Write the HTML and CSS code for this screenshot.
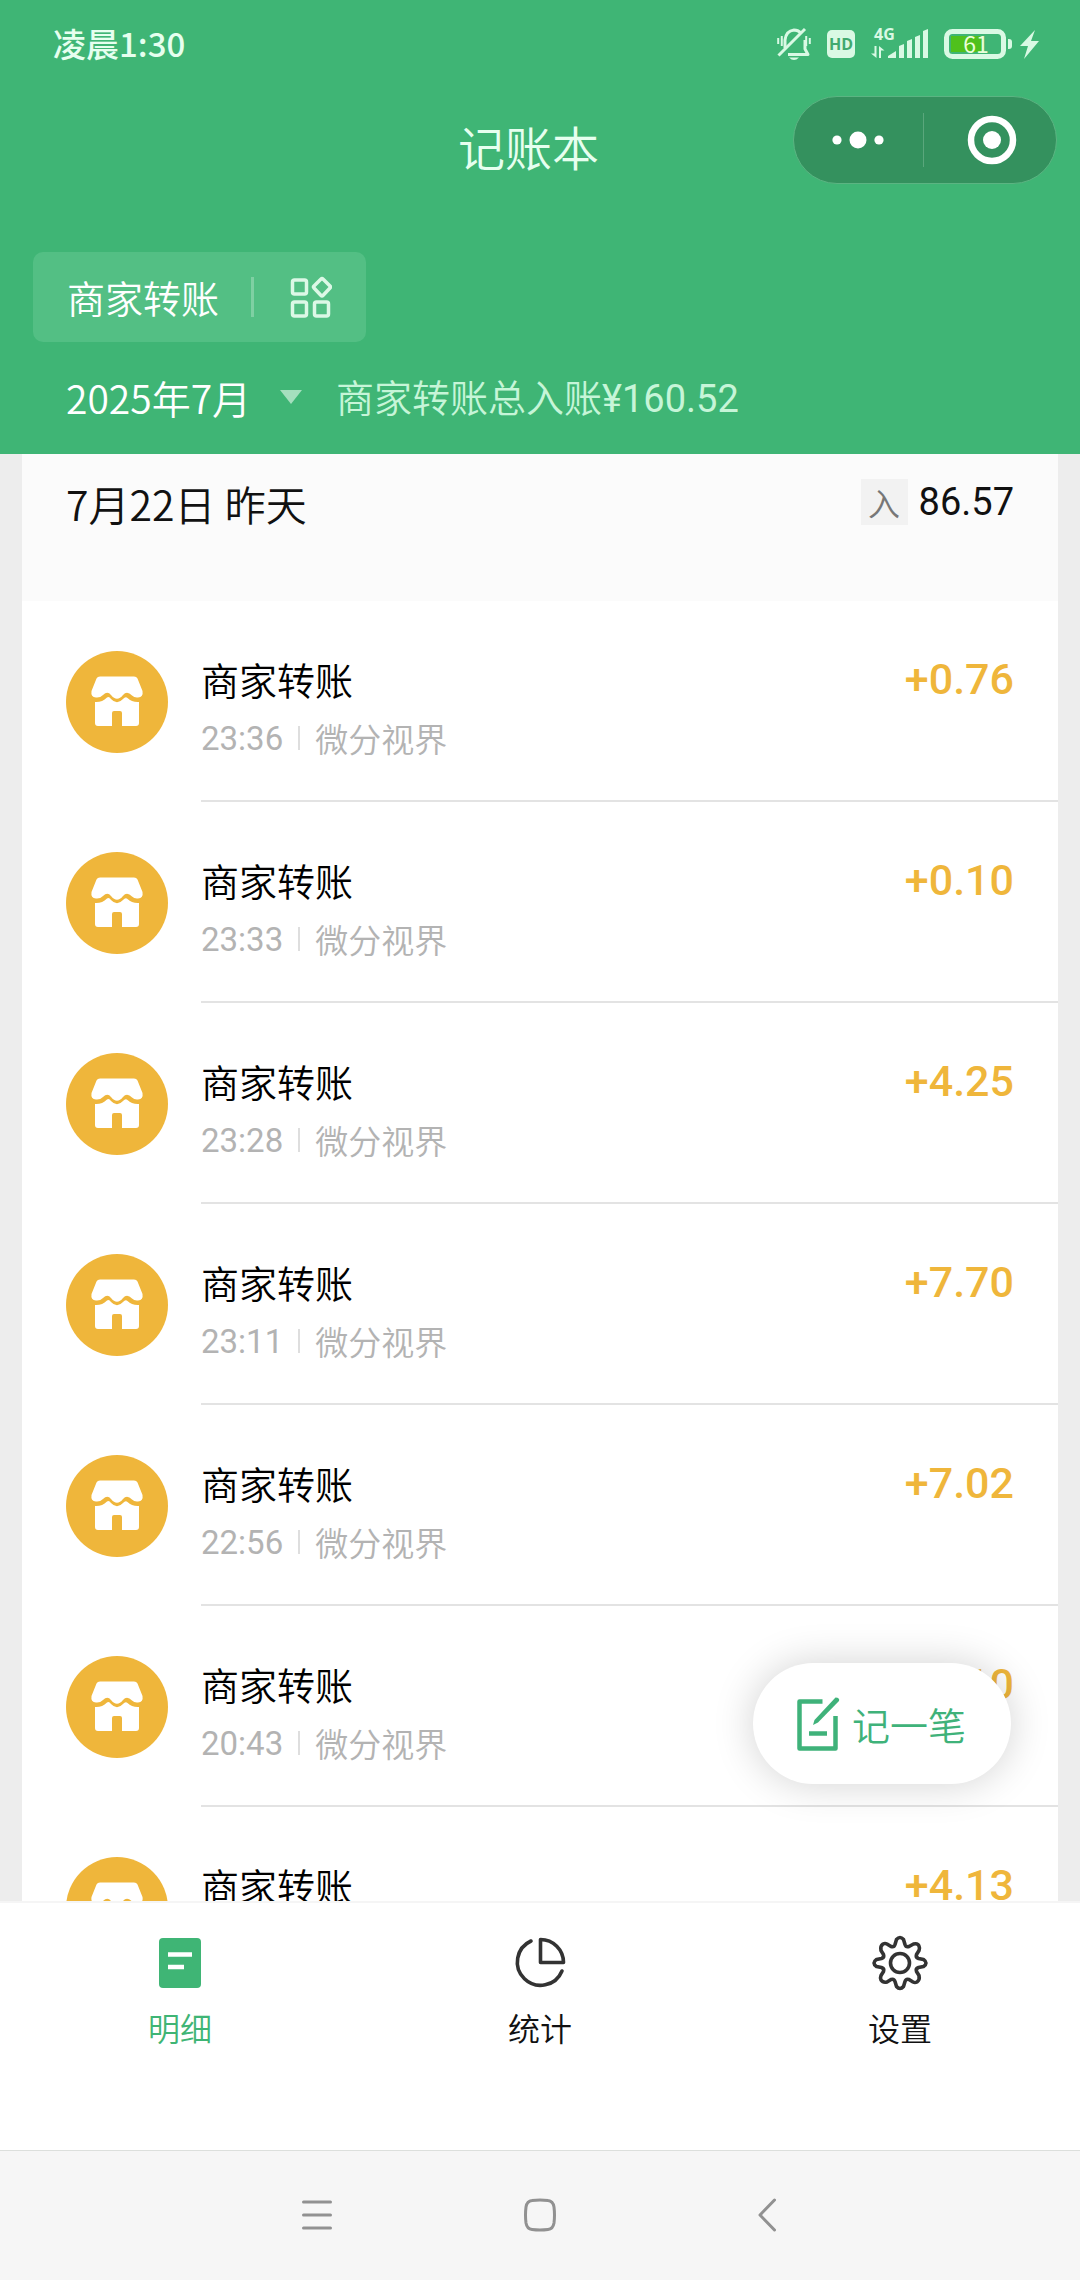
FILE: index.html
```html
<!DOCTYPE html>
<html lang="zh-CN">
<head>
<meta charset="utf-8">
<meta name="viewport" content="width=device-width, initial-scale=1">
<title>记账本</title>
<link rel="stylesheet" href="styles.css">
</head>
<body>
<svg class="defs" aria-hidden="true">
  <symbol id="shop" viewBox="0 0 102 102">
    <circle cx="51" cy="51" r="51" fill="#efb63b"/>
    <path fill="#fff" d="M34 25.500H68Q70.500 25.500 71.500 27.500L76.500 40Q77.500 46 72 46.500Q68.500 47 66 44.500Q61 39.500 57 44Q51 51.500 45 44Q41.500 39.500 37 44Q34 47 30 46.500Q24.500 46 25.500 40L30.500 27.500Q31.500 25.500 34 25.500Z"/>
    <path fill="#fff" d="M29 51Q36 51.500 41 46.500Q43 45 45 48Q51 54.500 57 48Q59.500 45 61.500 47Q66 51.500 73 51V72Q73 75 70 75H56V62Q56 60 54 60H48Q46 60 46 62V75H32Q29 75 29 72Z"/>
  </symbol>
</svg>
<div class="app">
  <header class="header">
    <div class="status">
      <span class="status-time">凌晨1:30</span>
      <div class="status-icons">
        <svg width="34" height="34" viewBox="0 0 34 34" fill="none" stroke="#d9f9e4" stroke-width="3" role="img" aria-label="静音">
          <path d="M8 21V13Q9 4 17 3Q21 3 24 6M28 13V22L31 27.500H11" stroke-linejoin="round"/>
          <path d="M1.500 28.500L28 2"/>
          <path d="M1.200 11V17M4.800 9V19M29.200 9V19M32.800 11V17" stroke-width="2"/>
          <path d="M12 30.500H22Q17 35.500 12 30.500Z" fill="#d9f9e4" stroke="none"/>
        </svg>
        <svg width="28" height="34" viewBox="0 0 28 34" role="img" aria-label="HD">
          <rect y="3" width="28" height="28" rx="5" fill="#d9f9e4"/>
          <text x="14" y="23" class="hd">HD</text>
        </svg>
        <svg class="signal" width="57" height="34" viewBox="0 0 57 34" fill="#d9f9e4" role="img" aria-label="4G 信号">
          <text x="3" y="13" class="net">4G</text>
          <path d="M3.500 19H5.500V31L0 26.500H3.500ZM8 31V19L13.500 23.500H10V31Z"/>
          <path d="M17 31V29L25 24V31ZM28 31V19L33 17V31ZM36 31V14L41 12V31ZM44 31V10L49 8V31ZM52 31V4L57 2V31Z"/>
        </svg>
        <svg class="battery" width="68" height="34" viewBox="0 0 68 34" role="img" aria-label="电量 61%">
          <rect x="2.500" y="4.500" width="57" height="25" rx="6" fill="none" stroke="#d9f9e4" stroke-width="5"/>
          <rect x="7" y="9" width="32" height="16" fill="#4fc11c"/>
          <path d="M64 12H65Q68 12 68 15V19Q68 22 65 22H64Z" fill="#d9f9e4"/>
          <text x="32" y="26" class="charge">61</text>
        </svg>
        <svg width="19" height="34" viewBox="0 0 19 34" fill="#d9f9e4" aria-hidden="true"><path d="M15 3L0 19H8L4 32L19 14H11Z"/></svg>
      </div>
    </div>
    <div class="navbar">
      <h1 class="title">记账本</h1>
      <div class="capsule">
        <button class="capsule-btn" aria-label="更多">
          <svg width="52" height="18" viewBox="0 0 52 18" fill="#fff"><circle cx="5" cy="9" r="4.600"/><circle cx="26" cy="9" r="8.500"/><circle cx="47" cy="9" r="4.600"/></svg>
        </button>
        <button class="capsule-btn" aria-label="关闭">
          <svg width="50" height="50" viewBox="0 0 50 50"><circle cx="25" cy="25" r="21" fill="none" stroke="#fff" stroke-width="6.500"/><circle cx="25" cy="25" r="9" fill="#fff"/></svg>
        </button>
      </div>
    </div>
    <button class="category">
      <span class="category-name">商家转账</span>
      <svg width="42" height="42" viewBox="0 0 42 42" fill="none" stroke="#dcf8e6" stroke-width="3.500"><rect x="2.500" y="4" width="14" height="14" rx="2"/><rect x="2.500" y="26" width="14" height="14" rx="2"/><rect x="24.500" y="26" width="14" height="14" rx="2"/><path d="M30.800 3.200Q32 2 33.200 3.200L40 10Q41 11 40 12L33.200 19.300Q32 20.500 30.800 19.300L24 12Q23 11 24 10Z"/></svg>
    </button>
    <div class="summary">
      <div class="month">
        <select class="month-select" aria-label="月份"><option>2025年7月</option></select>
        <svg width="22" height="14" viewBox="0 0 22 14" fill="#a5dfbe" aria-hidden="true"><path d="M0 0H22L11 14Z"/></svg>
      </div>
      <span class="total">商家转账总入账<span class="figure">¥160.52</span></span>
    </div>
  </header>

  <main class="content">
    <div class="scroll">
      <section class="day">
        <div class="day-head">
          <h2 class="day-title">7月22日 昨天</h2>
          <p class="day-sum"><span class="tag">入</span><span class="figure">86.57</span></p>
        </div>
        <ul class="records">
          <li class="record"><svg class="avatar"><use href="#shop"/></svg><div class="record-body"><div><p class="name">商家转账</p><p class="meta"><time>23:36</time><span class="source">微分视界</span></p></div><span class="amount">+0.76</span></div></li>
          <li class="record"><svg class="avatar"><use href="#shop"/></svg><div class="record-body"><div><p class="name">商家转账</p><p class="meta"><time>23:33</time><span class="source">微分视界</span></p></div><span class="amount">+0.10</span></div></li>
          <li class="record"><svg class="avatar"><use href="#shop"/></svg><div class="record-body"><div><p class="name">商家转账</p><p class="meta"><time>23:28</time><span class="source">微分视界</span></p></div><span class="amount">+4.25</span></div></li>
          <li class="record"><svg class="avatar"><use href="#shop"/></svg><div class="record-body"><div><p class="name">商家转账</p><p class="meta"><time>23:11</time><span class="source">微分视界</span></p></div><span class="amount">+7.70</span></div></li>
          <li class="record"><svg class="avatar"><use href="#shop"/></svg><div class="record-body"><div><p class="name">商家转账</p><p class="meta"><time>22:56</time><span class="source">微分视界</span></p></div><span class="amount">+7.02</span></div></li>
          <li class="record"><svg class="avatar"><use href="#shop"/></svg><div class="record-body"><div><p class="name">商家转账</p><p class="meta"><time>20:43</time><span class="source">微分视界</span></p></div><span class="amount">+0.10</span></div></li>
          <li class="record"><svg class="avatar"><use href="#shop"/></svg><div class="record-body"><div><p class="name">商家转账</p></div><span class="amount">+4.13</span></div></li>
        </ul>
      </section>
    </div>
    <button class="add">
      <svg width="43" height="54" viewBox="0 0 43 54" fill="none" stroke="#3fb27a" stroke-width="4.500"><path d="M25.500 4.500H2.500V51.500H38.500V19" stroke-linejoin="round"/><path d="M12 36.500H30"/><path d="M38.500 .500Q43 .500 42 4L21 25.500L16 28L17.500 23Z" fill="#3fb27a" stroke="none"/></svg>
      <span>记一笔</span>
    </button>
  </main>

  <nav class="tabs">
    <a class="tab tab-active" href="#list" aria-current="page">
      <svg width="56" height="56" viewBox="0 0 56 56"><rect x="7" y="3" width="42" height="50" rx="4" fill="#3fb575"/><path d="M16 19.500H40M16 32H32" stroke="#fff" stroke-width="4.500" fill="none"/></svg>
      <span>明细</span>
    </a>
    <a class="tab" href="#stats">
      <svg width="56" height="56" viewBox="0 0 56 56" fill="none" stroke="#333" stroke-width="3.600" stroke-linejoin="round" stroke-linecap="round"><path d="M28.500 4.500A23 23 0 0 1 51.500 27.500H28.500Z"/><path d="M19 6A23.200 23.200 0 1 0 50 36"/></svg>
      <span>统计</span>
    </a>
    <a class="tab" href="#settings">
      <svg width="56" height="56" viewBox="0 0 56 56" fill="none" stroke="#333" stroke-width="3.600" stroke-linejoin="round"><circle cx="28" cy="28" r="9.500"/><path d="M24.500 4.500Q28 .500 31.500 4.500L33 9.500Q34 12.500 37 11.500L41.500 9Q46 8 47 11Q48 13 47 15.500L44.500 19.500Q43.500 22.500 46.500 23.500L51.500 24.500Q56.500 28 51.500 31.500L46.500 32.500Q43.500 33.500 44.500 36.500L47 40.500Q48 45 45 47Q43 48 41 47L37 44.500Q34 43.500 33 46.500L31.500 51.500Q28 55.500 24.500 51.500L23 46.500Q22 43.500 19 44.500L15 47Q11 48 9 45Q8 43 9 40.500L11.500 36.500Q12.500 33.500 9.500 32.500L4.500 31.500Q-.500 28 4.500 24.500L9.500 23.500Q12.500 22.500 11.500 19.500L9 15.500Q8 11 11 9Q13 8 15 9L19 11.500Q22 12.500 23 9.500Z"/></svg>
      <span>设置</span>
    </a>
  </nav>

  <div class="system-nav">
    <button class="system-btn" aria-label="最近任务"><svg width="32" height="32" viewBox="0 0 32 32"><path d="M2.500 3H29.500M2.500 16H29.500M2.500 29H29.500"/></svg></button>
    <button class="system-btn" aria-label="主页"><svg width="34" height="34" viewBox="0 0 34 34"><path d="M9 2.500Q17 1.500 25 2.500Q30 3 31 9Q32 17 31 25Q30 31 25 31.500Q17 32.500 9 31.500Q4 31 3 25Q2 17 3 9Q4 3 9 2.500Z"/></svg></button>
    <button class="system-btn" aria-label="返回"><svg width="26" height="34" viewBox="0 0 26 34"><path d="M24.500 2L10 17L24.500 32"/></svg></button>
  </div>
</div>
</body>
</html>
```
FILE: styles.css
```css
* { box-sizing: border-box; }

body {
  margin: 0;
  font-family: "Noto Sans CJK SC", sans-serif;
  font-weight: 350;
  color: #111;
  background: #ededed;
}

h1, h2, p, ul { margin: 0; padding: 0; font-weight: inherit; }
ul { list-style: none; }
svg { display: block; flex: none; }
a { color: inherit; text-decoration: none; }

button, select {
  margin: 0;
  padding: 0;
  border: 0;
  background: none;
  color: inherit;
  font: inherit;
}

.defs { position: absolute; width: 0; height: 0; }
.figure { font-family: Roboto, "Noto Sans CJK SC", sans-serif; font-weight: 400; }

.app {
  display: flex;
  flex-direction: column;
  height: 100vh;
}

/* Header */
.header { background: #3fb575; color: #e6ffef; }

.status {
  display: flex;
  align-items: center;
  justify-content: space-between;
  height: 88px;
  padding: 0 41px 0 53px;
}
.status-time { padding-bottom: 2px; font-size: 33px; font-weight: 500; line-height: 40px; }
.status-icons { display: flex; gap: 16px; }
.battery { margin-right: -8px; }
.hd, .net { font-family: "Open Sans", sans-serif; font-weight: 700; }
.hd { font-size: 16px; text-anchor: middle; fill: #3fa96f; }
.net { font-size: 16px; }
.charge { font-size: 23px; font-weight: 400; text-anchor: middle; fill: #eaffda; }

.navbar {
  display: grid;
  grid-template-columns: 1fr auto 1fr;
  align-items: end;
  margin-top: 8px;
  padding-right: 23px;
}
.title { grid-column: 2; padding-bottom: 4px; font-size: 47px; line-height: 68px; }
.capsule {
  grid-column: 3;
  justify-self: end;
  display: flex;
  width: 264px;
  height: 88px;
  border: 1px solid #5bb482;
  border-radius: 44px;
  background: #34915e;
}
.capsule-btn {
  flex: 1;
  display: flex;
  align-items: center;
  justify-content: center;
}
.capsule-btn + .capsule-btn {
  padding-left: 5px;
  background: linear-gradient(#5aa77c, #5aa77c) left center / 1px 54px no-repeat;
}

.category {
  display: flex;
  align-items: center;
  height: 90px;
  margin: 68px 33px 0;
  padding: 0 34px;
  border-radius: 10px;
  background: #53bf84;
  font-size: 38px;
  color: #fff;
}
.category svg { margin-left: 36px; }
.category-name {
  padding-right: 32px;
  line-height: 40px;
  border-right: 3px solid #7fd0a3;
}

.summary {
  display: flex;
  align-items: center;
  gap: 34px;
  height: 112px;
  padding: 0 66px 2px;
  font-size: 38px;
  line-height: 56px;
}
.month { display: flex; align-items: center; gap: 28px; color: #fff; }
.month-select { appearance: none; font-size: 39px; }
.total { color: #c6f5d8; }

/* Record list */
.content {
  position: relative;
  flex: 1;
  min-height: 0;
  border-bottom: 2px solid #f5f5f5;
}
.scroll {
  height: 100%;
  padding: 0 22px;
  overflow-y: auto;
  scrollbar-width: none;
}
.day { background: #fff; }
.day-head {
  display: flex;
  justify-content: space-between;
  height: 147px;
  padding: 19px 44px;
  background: #fbfbfb;
  line-height: 60px;
}
.day-title { font-size: 41px; }
.day-sum { display: flex; align-items: center; gap: 11px; height: 58px; font-size: 38px; }
.tag {
  width: 47px;
  font-size: 32px;
  line-height: 46px;
  text-align: center;
  color: #777;
  background: #f2f2f2;
}

.record { display: flex; gap: 33px; padding-left: 44px; }
.avatar { width: 102px; height: 102px; margin-top: 50px; }
.record-body {
  flex: 1;
  display: flex;
  justify-content: space-between;
  height: 201px;
  padding: 49px 44px 0 0;
  border-bottom: 2px solid #e3e3e3;
}
.name { font-size: 38px; line-height: 58px; color: #000; }
.meta {
  display: flex;
  align-items: center;
  font-size: 33px;
  line-height: 58px;
  color: #b3b3b3;
}
.meta time { font-family: Roboto, sans-serif; font-weight: 400; padding-top: 2px; }
.source { display: flex; align-items: center; }
.source::before {
  content: "";
  width: 2px;
  height: 24px;
  margin: 0 15px;
  background: #dedede;
}
.amount {
  font-family: Roboto, sans-serif;
  font-size: 43px;
  font-weight: 500;
  line-height: 58px;
  color: #efb63b;
}

.add {
  position: absolute;
  right: 69px;
  bottom: 117px;
  display: flex;
  align-items: center;
  gap: 12px;
  height: 121px;
  padding: 0 45px 0 44px;
  border-radius: 61px;
  background: #fff;
  box-shadow: 0 0 40px rgba(0, 0, 0, 0.18);
  font-size: 38px;
  color: #3fb27a;
}

/* Bottom tabs */
.tabs {
  display: flex;
  height: 247px;
  padding-top: 32px;
  background: #fff;
}
.tab {
  flex: 1;
  display: flex;
  flex-direction: column;
  align-items: center;
  gap: 12px;
  font-size: 32px;
  line-height: 48px;
}
.tab-active { color: #3fb575; }

/* System navigation */
.system-nav {
  display: flex;
  height: 130px;
  padding: 0 19% 2px;
  border-top: 1px solid #dcdfdc;
  background: #f6f6f6;
}
.system-btn {
  flex: 1;
  display: flex;
  align-items: center;
  justify-content: center;
}
.system-btn svg {
  fill: none;
  stroke: #919191;
  stroke-width: 3;
  stroke-linecap: round;
  stroke-linejoin: round;
}
```
